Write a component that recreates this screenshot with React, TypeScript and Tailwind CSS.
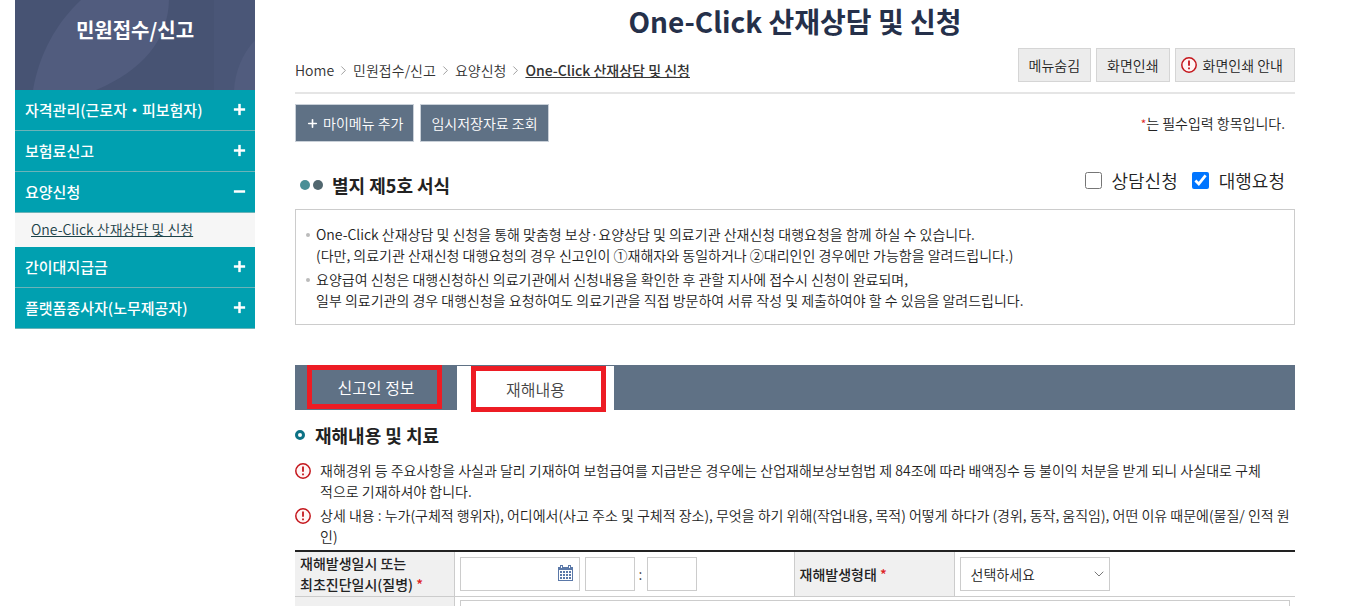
import React from "react";
import { Plus, Minus, ChevronRight, ChevronDown } from "lucide-react";

const menuItems = [
    { label: "자격관리(근로자・피보험자)", children: [] },
    { label: "보험료신고", children: [] },
    { label: "요양신청", children: ["One-Click 산재상담 및 신청"] },
    { label: "간이대지급금", children: [] },
    { label: "플랫폼종사자(노무제공자)", children: [] },
];

const breadcrumbs = ["Home", "민원접수/신고", "요양신청"];

const guides = [
    [
        "One-Click 산재상담 및 신청을 통해 맞춤형 보상·요양상담 및 의료기관 산재신청 대행요청을 함께 하실 수 있습니다.",
        "(다만, 의료기관 산재신청 대행요청의 경우 신고인이 ①재해자와 동일하거나 ②대리인인 경우에만 가능함을 알려드립니다.)",
    ],
    [
        "요양급여 신청은 대행신청하신 의료기관에서 신청내용을 확인한 후 관할 지사에 접수시 신청이 완료되며,",
        "일부 의료기관의 경우 대행신청을 요청하여도 의료기관을 직접 방문하여 서류 작성 및 제출하여야 할 수 있음을 알려드립니다.",
    ],
];

const warnings = [
    [
        "재해경위 등 주요사항을 사실과 달리 기재하여 보험급여를 지급받은 경우에는 산업재해보상보험법 제 84조에 따라 배액징수 등 불이익 처분을 받게 되니 사실대로 구체",
        "적으로 기재하셔야 합니다.",
    ],
    [
        "상세 내용 : 누가(구체적 행위자), 어디에서(사고 주소 및 구체적 장소), 무엇을 하기 위해(작업내용, 목적) 어떻게 하다가 (경위, 동작, 움직임), 어떤 이유 때문에(물질/ 인적 원",
        "인)",
    ],
];

const AlertIcon: React.FC = () => (
    <svg width="16" height="16" viewBox="0 0 16 16" fill="none" className="shrink-0">
        <circle cx="8" cy="8" r="7.2" fill="#fff5f5" stroke="#c4161c" strokeWidth="1.5" />
        <path d="M8 3.6v5.2" stroke="#c4161c" strokeWidth="1.8" />
        <path d="M8 10.4v1.8" stroke="#c4161c" strokeWidth="1.8" />
    </svg>
);

const CalendarIcon: React.FC = () => (
    <svg width="15" height="16" viewBox="0 0 15 16" fill="none" shapeRendering="crispEdges">
        <path d="M0 2h15v14H0z" fill="#5a78a8" />
        <path d="M2 0h3v4H2zM10 0h3v4h-3z" fill="#5a78a8" />
        <path d="M3 1h1v2H3zM11 1h1v2h-1z" fill="#fff" />
        <path d="M1 5h13v10H1z" fill="#fff" />
        {[6, 9, 12].map((y) =>
            [2, 5, 8, 11].map((x) => (
                <rect key={`${x}-${y}`} x={x} y={y} width="2" height="2" fill="#5a78a8" />
            ))
        )}
    </svg>
);

const Sidebar: React.FC = () => (
    <aside className="w-60 shrink-0">
        <div className="relative h-[90px] overflow-hidden bg-[#475373]">
            <svg
                className="absolute inset-0 h-full w-full"
                viewBox="0 0 240 90"
                preserveAspectRatio="none"
            >
                <path d="M18 90C24 54 42 22 66 0H154C153 40 128 70 81 90Z" fill="#515c7e" />
                <path d="M199 0H240V90H199Z" fill="#4a5677" />
                <path d="M219 90C220 72 227 54 240 40V90Z" fill="#515c7e" />
            </svg>
            <h2 className="relative pt-4 text-center text-xl leading-7 font-bold text-white">
                민원접수/신고
            </h2>
        </div>
        <ul>
            {menuItems.map((item) => (
                <li key={item.label}>
                    <button
                        type="button"
                        className="flex h-[41px] w-full items-center justify-between border-b border-[#6bb3b8] bg-[#00a0b0] pr-2 pb-px pl-[10px] text-[15px] font-medium text-white"
                    >
                        {item.label}
                        {item.children.length > 0 ? (
                            <Minus size={15} strokeWidth={4} strokeLinecap="square" />
                        ) : (
                            <Plus size={15} strokeWidth={4} strokeLinecap="square" />
                        )}
                    </button>
                    {item.children.map((child) => (
                        <a
                            key={child}
                            href="#"
                            className="block h-[34px] bg-[#f6f6f6] pl-4 text-sm leading-8 text-[#1c4248] underline"
                        >
                            {child}
                        </a>
                    ))}
                </li>
            ))}
        </ul>
    </aside>
);

const App: React.FC = () => {
    return (
        <div className="flex h-screen items-start gap-10 overflow-hidden bg-white pr-14 pl-[15px] font-['Noto_Sans_CJK_KR',sans-serif] text-sm font-[350] text-[#222]">
            <Sidebar />

            <main className="min-w-0 flex-1">
                <h1 className="h-12 text-center text-[28px] leading-[42px] font-bold text-[#25304a]">
                    One-Click 산재상담 및 신청
                </h1>

                {/* Breadcrumb and page tools */}
                <div className="flex h-[46px] justify-between border-b-2 border-[#e5e5e5]">
                    <nav className="flex h-11 items-center gap-[2px] text-[#333]">
                        {breadcrumbs.map((crumb) => (
                            <React.Fragment key={crumb}>
                                <a href="#">{crumb}</a>
                                <ChevronRight size={15} strokeWidth={1} className="text-[#666]" />
                            </React.Fragment>
                        ))}
                        <a href="#" className="font-medium underline">
                            One-Click 산재상담 및 신청
                        </a>
                    </nav>
                    <div className="flex gap-[5px]">
                        <button type="button" className="h-[34px] border border-[#d5d5d5] bg-[#ececec] px-[10px]">
                            메뉴숨김
                        </button>
                        <button type="button" className="h-[34px] border border-[#d5d5d5] bg-[#ececec] px-[10px]">
                            화면인쇄
                        </button>
                        <button
                            type="button"
                            className="flex h-[34px] items-center gap-[6px] border border-[#d5d5d5] bg-[#ececec] pr-[11px] pl-[5px]"
                        >
                            <AlertIcon />
                            화면인쇄 안내
                        </button>
                    </div>
                </div>

                <div className="mt-[10px] flex h-[38px] items-center justify-between">
                    <div className="flex gap-[6px]">
                        <button
                            type="button"
                            className="flex h-[38px] items-center gap-1 border border-[#c9d0d8] bg-[#5f7185] px-[10px] text-white"
                        >
                            <Plus size={13} strokeWidth={3} />
                            마이메뉴 추가
                        </button>
                        <button type="button" className="h-[38px] border border-[#c9d0d8] bg-[#5f7185] px-[10px] text-white">
                            임시저장자료 조회
                        </button>
                    </div>
                    <p className="pr-[10px]">
                        <span className="text-xs text-[#d22]">*</span>는 필수입력 항목입니다.
                    </p>
                </div>

                {/* Form title */}
                <div className="mt-6 flex h-[43px] items-start justify-between pr-[10px] pl-[5px]">
                    <h2 className="flex items-center gap-[9px] pt-[5px] text-lg leading-7 font-bold">
                        <span className="flex gap-[3px]">
                            <span className="size-[10px] rounded-full bg-[#488f96]" />
                            <span className="size-[10px] rounded-full bg-[#51676f]" />
                        </span>
                        별지 제5호 서식
                    </h2>
                    <div className="flex items-center gap-[14px] text-lg leading-7">
                        <label className="flex items-center gap-[10px]">
                            <input type="checkbox" className="size-[17px]" />
                            상담신청
                        </label>
                        <label className="flex items-center gap-[10px]">
                            <input type="checkbox" defaultChecked className="size-[17px] accent-[#0075ff]" />
                            대행요청
                        </label>
                    </div>
                </div>

                <ul className="space-y-[3px] border border-[#ccc] px-[10px] pt-[14px] pb-[13px] leading-[21px]">
                    {guides.map((lines) => (
                        <li key={lines[0]} className="flex gap-[6px]">
                            <span className="mt-[9px] size-1 shrink-0 rounded-full bg-[#bbb]" />
                            <div>
                                {lines.map((line) => (
                                    <p key={line}>{line}</p>
                                ))}
                            </div>
                        </li>
                    ))}
                </ul>

                {/* Tabs */}
                <div className="mt-10 flex h-[45px] border-t border-[#5f7185] bg-[#5f7185] text-base">
                    <button type="button" className="relative w-[162px] pb-[2px] text-white">
                        신고인 정보
                        <span className="absolute -top-px right-[15px] bottom-px left-3 border-5 border-[#ed1c24]" />
                    </button>
                    <button type="button" className="relative w-[157px] bg-white pt-px text-[#444]">
                        재해내용
                        <span className="absolute top-0 right-2 -bottom-[2px] left-[14px] border-5 border-[#ed1c24]" />
                    </button>
                </div>

                <h3 className="mt-[11px] flex items-center gap-[10px] text-lg leading-7 font-bold">
                    <span className="size-[10px] rounded-full border-3 border-[#0d7285]" />
                    재해내용 및 치료
                </h3>

                <ul className="mt-[11px] space-y-[3px] leading-[21px]">
                    {warnings.map((lines) => (
                        <li key={lines[0]} className="flex gap-[9px]">
                            <span className="mt-[3px]">
                                <AlertIcon />
                            </span>
                            <div>
                                {lines.map((line) => (
                                    <p key={line}>{line}</p>
                                ))}
                            </div>
                        </li>
                    ))}
                </ul>

                <table className="mt-[3px] w-full table-fixed border-collapse border-t-2 border-[#222]">
                    <colgroup>
                        <col className="w-[159px]" />
                        <col className="w-[34%]" />
                        <col className="w-40" />
                        <col />
                    </colgroup>
                    <tbody>
                        <tr className="h-[45px] border-b border-[#ccc]">
                            <th scope="row" className="border-r border-[#ccc] bg-[#f0f0f0] pl-[5px] text-left leading-[21px] font-medium">
                                재해발생일시 또는
                                <br />
                                최초진단일시(질병) <span className="text-[#d22]">*</span>
                            </th>
                            <td className="px-[5px]">
                                <div className="flex items-center">
                                    <div className="relative">
                                        <input aria-label="재해발생일" className="block h-[34px] w-[120px] border border-[#ccc] px-2" />
                                        <button type="button" aria-label="달력" className="absolute top-2 right-[7px]">
                                            <CalendarIcon />
                                        </button>
                                    </div>
                                    <input aria-label="시" className="ml-[5px] h-[34px] w-[50px] border border-[#ccc] px-2" />
                                    <span className="w-3 text-center">:</span>
                                    <input aria-label="분" className="h-[34px] w-[50px] border border-[#ccc] px-2" />
                                </div>
                            </td>
                            <th scope="row" className="border-x border-[#ccc] bg-[#f0f0f0] pl-[5px] text-left font-medium">
                                <label htmlFor="accident-type">재해발생형태</label> <span className="text-[#d22]">*</span>
                            </th>
                            <td className="px-[5px]">
                                <div className="relative w-[150px]">
                                    <select id="accident-type" className="block h-[34px] w-full appearance-none border border-[#ccc] bg-white px-[10px]">
                                        <option>선택하세요</option>
                                    </select>
                                    <ChevronDown size={16} strokeWidth={1} className="pointer-events-none absolute top-[9px] right-[3px] text-[#333]" />
                                </div>
                            </td>
                        </tr>
                        <tr className="h-[45px]">
                            <th scope="row" className="border-r border-[#ccc] bg-[#f0f0f0]" />
                            <td colSpan={3} className="px-[5px] pt-[3px] align-top">
                                <input aria-label="재해발생장소" className="block h-[34px] w-full border border-[#ccc] px-2" />
                            </td>
                        </tr>
                    </tbody>
                </table>
            </main>
        </div>
    );
};

export default App;
